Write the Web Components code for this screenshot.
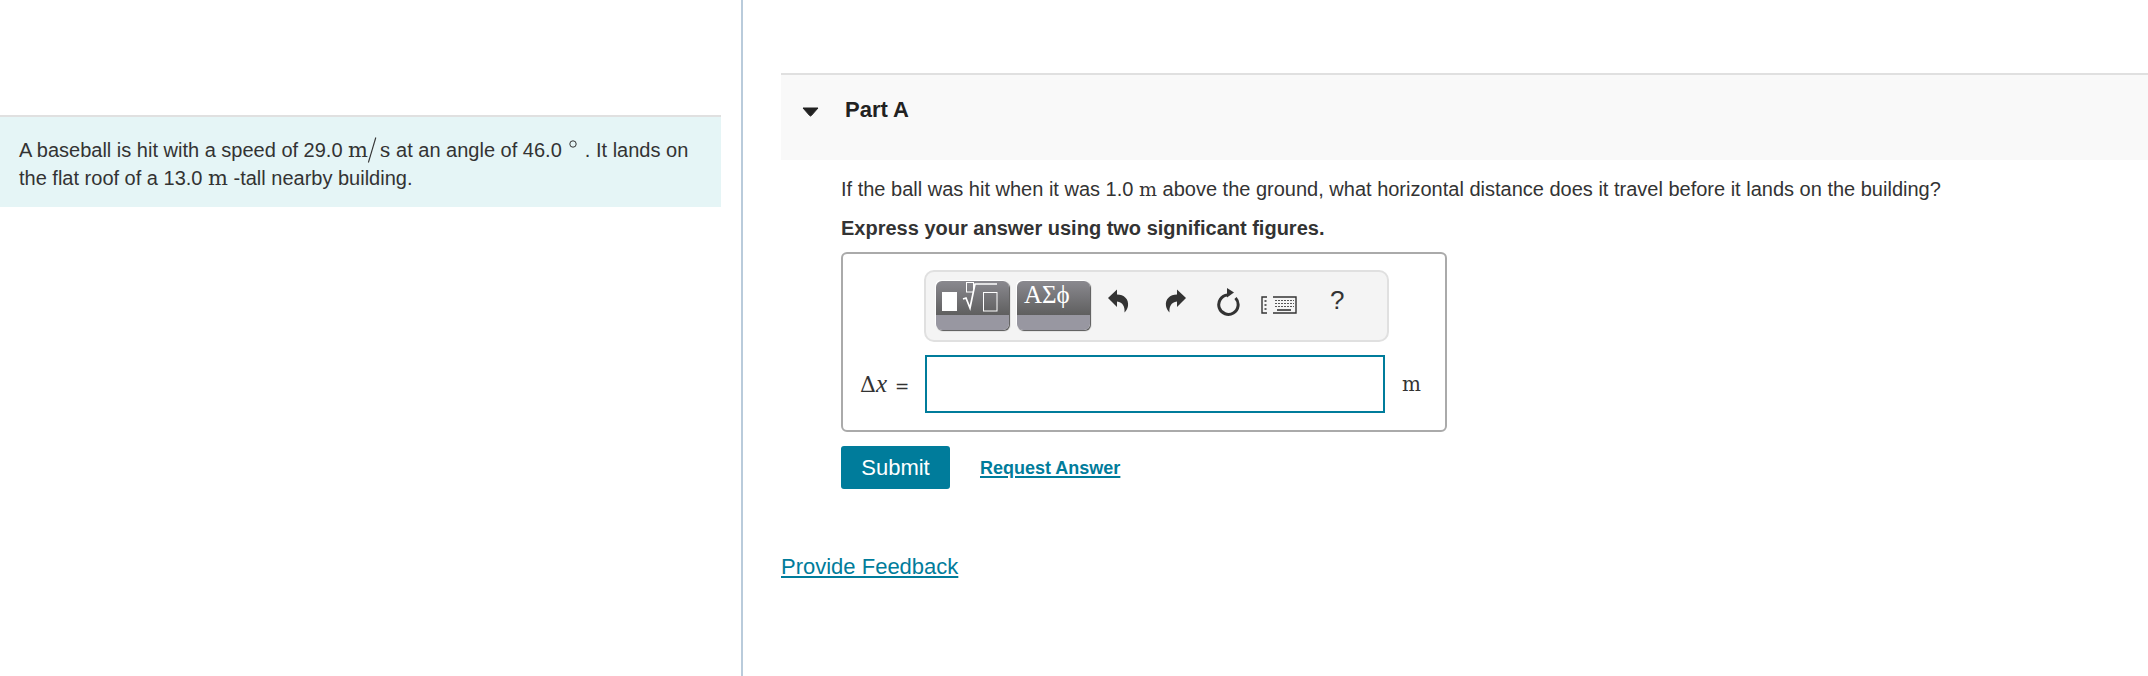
<!DOCTYPE html>
<html>
<head>
<meta charset="utf-8">
<title>Part A</title>
<style>
  html, body { margin: 0; padding: 0; background: #fff; }
  body { font-family: "Liberation Sans", Arial, sans-serif; color: #333; }
</style>
</head>
<body>
<quiz-page>
  <intro-panel slot="left">A baseball is hit with a speed of 29.0 <math-text>m</math-text><frac-slash></frac-slash><math-text>s</math-text> at an angle of 46.0 <sup-deg></sup-deg> . It lands on<br>the flat roof of a 13.0 <math-text>m</math-text> -tall nearby building.</intro-panel>
  <part-header slot="right">Part A</part-header>
  <part-body slot="right"></part-body>
</quiz-page>

<script>
class QuizPage extends HTMLElement {
  constructor() {
    super();
    this.attachShadow({ mode: "open" }).innerHTML = `
    <style>
      :host { display: flex; height: 676px; overflow: hidden; }
      .left { flex: none; width: 741px; box-sizing: border-box; padding-top: 115px; }
      .rule { flex: none; width: 2px; background: #b9cbdb; }
      .right { flex: 1; min-width: 0; box-sizing: border-box; padding: 73px 0 0 38px; }
    </style>
    <div class="left"><slot name="left"></slot></div>
    <div class="rule"></div>
    <div class="right"><slot name="right"></slot></div>`;
  }
}

class IntroPanel extends HTMLElement {
  constructor() {
    super();
    this.attachShadow({ mode: "open" }).innerHTML = `
    <style>
      :host {
        display: block; width: 721px; height: 92px; box-sizing: border-box;
        border-top: 2px solid #e0e0e0; background: #e5f5f6;
        padding: 19px 19px 0; font-size: 20px; line-height: 28px; color: #333; white-space: nowrap;
      }
    </style>
    <slot></slot>`;
  }
}

class MathText extends HTMLElement {
  constructor() {
    super();
    this.attachShadow({ mode: "open" }).innerHTML = `
    <style>:host { display: inline; font-family: "DejaVu Serif", serif; font-size: 21px; line-height: 1; }</style>
    <slot></slot>`;
  }
}

class FracSlash extends HTMLElement {
  constructor() {
    super();
    this.attachShadow({ mode: "open" }).innerHTML = `
    <style>
      :host { display: inline-block; width: 10px; height: 26px; vertical-align: -6px; margin: 0 -4px 0 -1px; }
      svg { display: block; }
    </style>
    <svg width="10" height="26" viewBox="0 0 10 26"><path d="M8.8 0.5 L1.4 25.5" stroke="#333" stroke-width="1.1" fill="none"/></svg>`;
  }
}

class SupDeg extends HTMLElement {
  constructor() {
    super();
    this.attachShadow({ mode: "open" }).innerHTML = `
    <style>
      :host { display: inline-block; width: 10px; height: 10px; vertical-align: 8px; margin: 0 1px 0 1px; }
      svg { display: block; }
    </style>
    <svg width="10" height="10" viewBox="0 0 10 10"><circle cx="5" cy="5" r="3.2" stroke="#333" stroke-width="1" fill="none"/></svg>`;
  }
}

class PartHeader extends HTMLElement {
  constructor() {
    super();
    this.attachShadow({ mode: "open" }).innerHTML = `
    <style>
      :host {
        display: flex; align-items: flex-start; height: 87px; box-sizing: border-box;
        border-top: 2px solid #e0e0e0; background: #f9f9f9;
        padding: 22px 0 0 21px; font-size: 22px; font-weight: bold; line-height: 26px; color: #222;
      }
      svg { flex: none; display: block; margin: 10px 26px 0 0; }
    </style>
    <svg width="17" height="10" viewBox="0 0 17 10"><path d="M1 1 H16 L9.3 8.6 Q8.5 9.4 7.7 8.6 Z" fill="#222" stroke="#222" stroke-linejoin="round"/></svg>
    <slot></slot>`;
  }
}

class MathToolbar extends HTMLElement {
  constructor() {
    super();
    this.attachShadow({ mode: "open" }).innerHTML = `
    <style>
      :host {
        display: flex; align-items: flex-start; width: 465px; height: 72px; box-sizing: border-box;
        margin-left: 81px; padding: 9px 0 0 10px;
        border: 2px solid #e0e0e0; border-radius: 10px; background: #f4f4f4;
      }
      .btn {
        flex: none; width: 73px; height: 49px; box-sizing: border-box; overflow: hidden;
        border-radius: 6px; display: flex; flex-direction: column;
        box-shadow: -1px -1px 0 #fff, 1px 1px 1px #555;
      }
      .btn + .btn { margin-left: 8px; }
      .top { height: 34px; background: linear-gradient(#8a898f, #5f5f5f); color: #fff; }
      .bottom { flex: 1; background: #9897a1; }
      .top svg { display: block; }
      .greek {
        display: block; font-family: "Liberation Serif", serif; font-size: 25px;
        line-height: 28px; padding-left: 7px; white-space: nowrap;
      }
      .ico { flex: none; display: block; }
      .undo { margin: 8px 0 0 18px; }
      .redo { margin: 8px 0 0 36px; }
      .reset { margin: 7px 0 0 30px; }
      .keys { margin: 15px 0 0 20px; }
      .help {
        flex: none; margin: 4px 0 0 33px; font-size: 26px; line-height: 30px; color: #333;
      }
    </style>
    <div class="btn">
      <div class="top">
        <svg width="73" height="34" viewBox="0 0 73 34">
          <rect x="6" y="11" width="15" height="19" fill="#fff"/>
          <rect x="30.5" y="1.5" width="7" height="9.5" fill="none" stroke="#fff" stroke-width="1"/>
          <path d="M27 18 L30 17 L34 27 L39 3 H61" fill="none" stroke="#fff" stroke-width="1.7"/>
          <rect x="47.5" y="11.5" width="13.5" height="18.5" fill="none" stroke="#fff" stroke-width="1"/>
        </svg>
      </div>
      <div class="bottom"></div>
    </div>
    <div class="btn">
      <div class="top"><span class="greek">ΑΣϕ</span></div>
      <div class="bottom"></div>
    </div>
    <svg class="ico undo" width="21" height="24" viewBox="0 0 21 24">
      <path d="M0 9 L9 0.5 V5.5 C16 5.5 21 10 20 17 C19.5 20 18 22 16.5 23.5 C17 18 15 13 9 12.5 V18 Z" fill="#333"/>
    </svg>
    <svg class="ico redo" width="21" height="24" viewBox="0 0 21 24">
      <path d="M21 9 L12 0.5 V5.5 C5 5.5 0 10 1 17 C1.5 20 3 22 4.5 23.5 C4 18 6 13 12 12.5 V18 Z" fill="#333"/>
    </svg>
    <svg class="ico reset" width="25" height="28" viewBox="0 0 25 28">
      <path d="M11.5 7 A9.7 9.7 0 1 0 19.5 10" fill="none" stroke="#333" stroke-width="3"/>
      <path d="M11 0 L18 4.5 L11 9.5 Z" fill="#333"/>
    </svg>
    <svg class="ico keys" width="36" height="18" viewBox="0 0 36 18">
      <path d="M6 1 H1 V17 H6 M12 1 H35 V17 H12" fill="none" stroke="#333" stroke-width="1.4"/>
      <path d="M3.5 5 H5.5 M3.5 9 H5.5 M3.5 13 H5.5" stroke="#333" stroke-width="1.4" fill="none"/>
      <path d="M14 4.5 H33 M14 7.5 H33 M14 10.5 H33" stroke="#555" stroke-width="1.2" stroke-dasharray="2 1" fill="none"/>
      <path d="M16 14 H30" stroke="#333" stroke-width="1.6" fill="none"/>
    </svg>
    <span class="help">?</span>`;
  }
}

class AnswerBox extends HTMLElement {
  constructor() {
    super();
    this.attachShadow({ mode: "open" }).innerHTML = `
    <style>
      :host {
        display: block; width: 606px; height: 180px; box-sizing: border-box;
        border: 2px solid #aaa; border-radius: 6px; padding-top: 16px;
      }
      .row { display: flex; align-items: center; margin-top: 13px; }
      .label {
        flex: none; width: 82px; box-sizing: border-box; padding-left: 17px;
        font-family: "DejaVu Serif", serif; font-size: 22px; white-space: nowrap; color: #333;
      }
      .label i { font-family: "Liberation Serif", serif; font-size: 25px; }
      .label small { font-size: 17px; margin-left: 1px; font-family: "DejaVu Sans", sans-serif; }
      .field {
        flex: none; width: 460px; height: 58px; box-sizing: border-box;
        border: 2px solid #007c9b; background: #fff;
      }
      .unit {
        flex: none; margin-left: 17px; font-family: "DejaVu Serif", serif; font-size: 20px; color: #333;
      }
    </style>
    <math-toolbar></math-toolbar>
    <div class="row">
      <div class="label">Δ<i>x</i> <small>=</small></div>
      <div class="field"></div>
      <div class="unit">m</div>
    </div>`;
  }
}

class ActionRow extends HTMLElement {
  constructor() {
    super();
    this.attachShadow({ mode: "open" }).innerHTML = `
    <style>
      :host { display: flex; align-items: center; margin-top: 14px; }
      button {
        width: 109px; height: 43px; border: 0; border-radius: 3px; padding: 0;
        background: #007c9b; color: #fff; font: 22px "Liberation Sans", Arial, sans-serif;
      }
      a {
        margin-left: 30px; padding-top: 2px; font-size: 18px; font-weight: bold; color: #007c9b;
        text-decoration: underline; text-decoration-thickness: 2px; text-underline-offset: 2px;
      }
    </style>
    <button>Submit</button>
    <a href="#">Request Answer</a>`;
  }
}

class PartBody extends HTMLElement {
  constructor() {
    super();
    this.attachShadow({ mode: "open" }).innerHTML = `
    <style>
      :host { display: block; font-size: 20px; color: #333; }
      .inner { padding-left: 60px; }
      p { margin: 0; line-height: 29px; white-space: nowrap; }
      math-text { font-size: 19px; }
      .q { padding-top: 15px; }
      .hint { font-weight: bold; margin-top: 10px; margin-bottom: 9px; }
      .feedback {
        display: inline-block; margin-top: 65px; font-size: 22px; color: #007c9b;
        text-decoration: underline; text-decoration-thickness: 2px; text-underline-offset: 2px;
      }
    </style>
    <div class="inner">
      <p class="q">If the ball was hit when it was 1.0 <math-text>m</math-text> above the ground, what horizontal distance does it travel before it lands on the building?</p>
      <p class="hint">Express your answer using two significant figures.</p>
      <answer-box></answer-box>
      <action-row></action-row>
    </div>
    <a class="feedback" href="#">Provide Feedback</a>`;
  }
}

customElements.define("math-text", MathText);
customElements.define("frac-slash", FracSlash);
customElements.define("sup-deg", SupDeg);
customElements.define("intro-panel", IntroPanel);
customElements.define("part-header", PartHeader);
customElements.define("math-toolbar", MathToolbar);
customElements.define("answer-box", AnswerBox);
customElements.define("action-row", ActionRow);
customElements.define("part-body", PartBody);
customElements.define("quiz-page", QuizPage);
</script>
</body>
</html>
